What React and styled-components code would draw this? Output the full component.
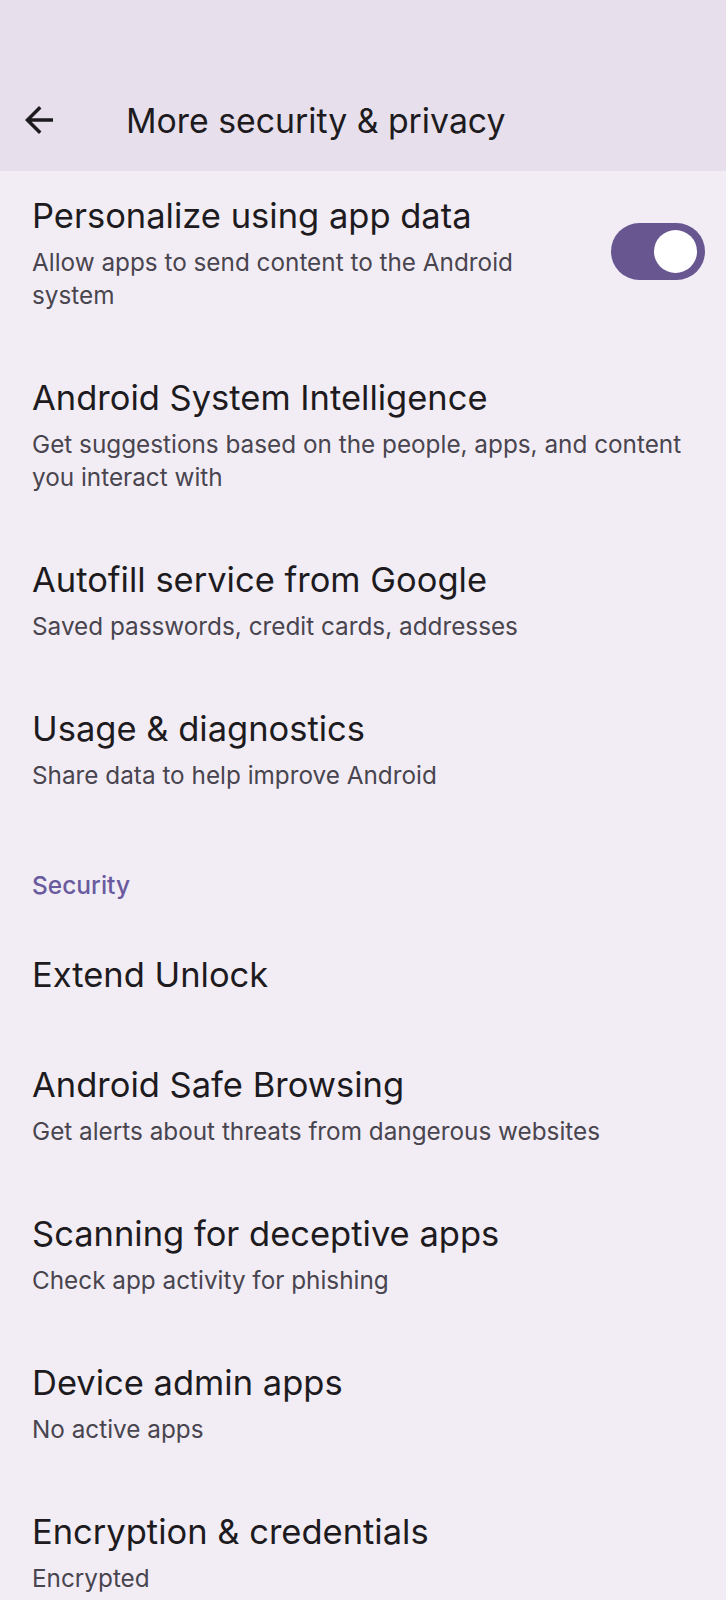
import React from "react";
import styled, { createGlobalStyle } from "styled-components";

const GlobalStyle = createGlobalStyle`
  body {
    margin: 0;
    background: #f2edf5;
    font-family: "Inter", "Roboto", sans-serif;
    -webkit-font-smoothing: antialiased;
  }
`;

const general = [
  {
    title: "Personalize using app data",
    summary: "Allow apps to send content to the Android system",
    toggle: true,
  },
  {
    title: "Android System Intelligence",
    summary: "Get suggestions based on the people, apps, and content you interact with",
  },
  {
    title: "Autofill service from Google",
    summary: "Saved passwords, credit cards, addresses",
  },
  {
    title: "Usage & diagnostics",
    summary: "Share data to help improve Android",
  },
];

const security = [
  { title: "Extend Unlock" },
  {
    title: "Android Safe Browsing",
    summary: "Get alerts about threats from dangerous websites",
  },
  {
    title: "Scanning for deceptive apps",
    summary: "Check app activity for phishing",
  },
  { title: "Device admin apps", summary: "No active apps" },
  { title: "Encryption & credentials", summary: "Encrypted" },
];

function BackArrow() {
  return (
    <svg width="42" height="42" viewBox="0 -960 960 960" fill="#1d1b20">
      <path d="M313-440l224 224-57 56-320-320 320-320 57 56-224 224h487v80H313Z" />
    </svg>
  );
}

function Preference({ title, summary, toggle }) {
  return (
    <Row>
      <TextCol>
        <Title>{title}</Title>
        {summary && <Summary>{summary}</Summary>}
      </TextCol>
      {toggle && (
        <Switch>
          <Thumb />
        </Switch>
      )}
    </Row>
  );
}

export default function App() {
  return (
    <>
      <GlobalStyle />
      <Page>
        <TopBar>
          <Toolbar>
            <BackButton>
              <BackArrow />
            </BackButton>
            <BarTitle>More security &amp; privacy</BarTitle>
          </Toolbar>
        </TopBar>
        <List>
          {general.map((p) => (
            <Preference key={p.title} {...p} />
          ))}
          <Category>Security</Category>
          {security.map((p) => (
            <Preference key={p.title} {...p} />
          ))}
        </List>
      </Page>
    </>
  );
}

const Page = styled.div`
  display: flex;
  flex-direction: column;
  height: 1600px;
  overflow: hidden;
`;

const TopBar = styled.header`
  height: 171px;
  box-sizing: border-box;
  padding-top: 78px;
  background: #e7e0ec;
  flex-shrink: 0;
`;

const Toolbar = styled.div`
  height: 84px;
  display: flex;
  align-items: center;
  padding-left: 18px;
`;

const BackButton = styled.div`
  width: 42px;
  height: 42px;
  display: flex;
  align-items: center;
  justify-content: center;
`;

const BarTitle = styled.h1`
  margin: 0 0 0 66px;
  font-size: 33.8px;
  font-weight: 400;
  color: #1d1b20;
  letter-spacing: 0;
`;

const List = styled.div`
  display: flex;
  flex-direction: column;

  & > div:first-child {
    padding-top: 23px;
  }
`;

const Row = styled.div`
  display: flex;
  align-items: center;
  gap: 30px;
  min-height: 113px;
  box-sizing: border-box;
  padding: 32px 21px 32px 32px;
`;

const TextCol = styled.div`
  flex: 1;
  min-width: 0;
`;

const Title = styled.div`
  font-size: 34.5px;
  line-height: 44px;
  color: #1d1b20;
`;

const Summary = styled.div`
  margin-top: 8px;
  font-size: 24.3px;
  line-height: 33px;
  color: #49454f;
`;

const Switch = styled.div`
  width: 94px;
  height: 57px;
  margin-bottom: 4px;
  border-radius: 29px;
  background: #675690;
  display: flex;
  align-items: center;
  justify-content: flex-end;
  padding: 0 8px;
  box-sizing: border-box;
  flex-shrink: 0;
`;

const Thumb = styled.div`
  width: 43px;
  height: 43px;
  border-radius: 50%;
  background: #ffffff;
`;

const Category = styled.div`
  padding: 46px 32px 18px;
  font-size: 24.5px;
  line-height: 30px;
  font-weight: 500;
  color: #6a5a9e;
`;
